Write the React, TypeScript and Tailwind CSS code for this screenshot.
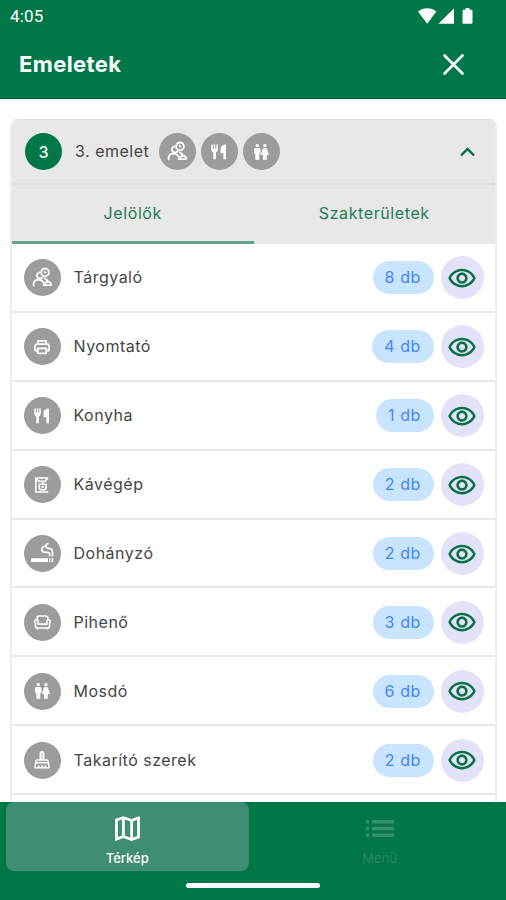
import { useState } from "react";
import type { ReactNode } from "react";

type Marker = { name: string; count: number; icon: ReactNode };

function MeetingIcon() {
  return (
    <svg width="21" height="21" viewBox="0 0 21 21" fill="none" stroke="white" strokeWidth="1.800" strokeLinecap="round" strokeLinejoin="round">
      <circle cx="13" cy="5.400" r="3.900" />
      <path d="M12.600 4v1.600h1.400" strokeWidth="1.200" />
      <path d="M7.400 5.400a3.200 3.200 0 0 0-2.400 3c0 1.400.9 2.600 2.200 3 1.400.3 2.900-.2 3.600-1.300" />
      <path d="M1.600 18.400v-1.600c0-2 1.600-3.600 3.600-4.200l3 .2c1.400.4 2.400 1.100 3 2.400" />
      <path d="M13 11.300l3 2.800M11.600 18.200h7.400v-1.400c0-1.200-1.400-2-3-2-2.200 0-3.800 1.400-4.400 3.400z" />
    </svg>
  );
}

function PrinterIcon() {
  return (
    <svg className="-ml-px" width="18" height="18" viewBox="0 0 18 18" fill="none" stroke="white" strokeWidth="1.800" strokeLinejoin="round">
      <path d="M4.800 6V2.800h8.400V6M4.600 12.600H2V8.200c0-1.200.9-2 2.100-2h9.800c1.200 0 2.100.8 2.100 2v4.400h-2.600" />
      <path d="M4.800 10.300h8.400v5H4.800z" />
    </svg>
  );
}

function KitchenIcon() {
  return (
    <svg className="-ml-px" width="18" height="18" viewBox="0 0 18 18" fill="white">
      <path d="M1.300 1.500h1.500v4.300h1V1.500h1.500v4.300h1V1.500h1.500v5c0 1.400-.8 2.500-1.900 2.900v6.900H3.300V9.400C2.100 9 1.300 7.900 1.300 6.500z" />
      <path d="M16 1.500v14.800h-2.600V10.300h-2.800V5.700c0-2.400 2.300-4.200 5.400-4.200z" />
    </svg>
  );
}

function CoffeeIcon() {
  return (
    <svg className="-ml-px" width="18" height="18" viewBox="0 0 18 18" fill="none" stroke="white" strokeWidth="1.600">
      <path d="M15.200 2H2.800v14h12.400M3 2l2.500 3.200h6.600L14.800 2" />
      <path d="M6.300 8.200h6.800v3.200a2.400 2.400 0 0 1-2.400 2.400h-2a2.400 2.400 0 0 1-2.400-2.400z" />
      <path d="M9.700 5v3.200M8.400 10.900h2.600" />
    </svg>
  );
}

function SmokingIcon() {
  return (
    <svg width="25" height="25" viewBox="0 0 25 25" fill="white">
      <path d="M1 17.200h17v3.900H1zM19 17.200h1.500v3.900H19zM21.700 17.200h1.500v3.900h-1.500z" />
      <g fill="none" stroke="white" strokeWidth="1.700">
        <path d="M18.700 2.500c-2.200.1-3.200 1.300-2.700 3.100.3 1.200 1.200 1.800 2.500 1.800 2.400.1 4 1.500 4 4v3.900" />
        <path d="M15.500 5.200c-2.600.2-4 1.700-3.700 3.600.3 1.700 1.600 2.600 3.600 2.600h1.900c1.700 0 2.500.9 2.500 2.300v1.600" />
      </g>
    </svg>
  );
}

function SofaIcon() {
  return (
    <svg width="19" height="19" viewBox="0 0 19 19" fill="none" stroke="white" strokeWidth="1.700" strokeLinejoin="round">
      <path d="M4.200 7V4.800c0-1.100.9-1.800 2-1.800h6.600c1.100 0 2 .7 2 1.800V7" />
      <path d="M5.200 11.200V8.700a1.800 1.800 0 1 0-3.500.6c.2.500.5.800.8 1v3.200c0 .9.700 1.500 1.500 1.500h11c.8 0 1.500-.6 1.500-1.500v-3.200c.3-.2.6-.5.8-1a1.800 1.800 0 1 0-3.500-.6v2.500z" />
      <path d="M4.500 15v1.400M14.500 15v1.400" />
    </svg>
  );
}

function ToiletIcon() {
  return (
    <svg className="-ml-px" width="18" height="18" viewBox="0 0 18 18" fill="white">
      <circle cx="5.300" cy="2.600" r="1.700" />
      <path d="M3.600 4.900H7c.9 0 1.500.6 1.500 1.500v4.300H7.300v6.100H3.300v-6.100H2V6.400c0-.9.700-1.500 1.600-1.500z" />
      <circle cx="12.900" cy="2.600" r="1.700" />
      <path d="M12.200 4.900h1.400c.7 0 1.200.4 1.400 1l2 6h-2.200v4.900H11v-4.900H8.800l2-6c.2-.6.7-1 1.400-1z" />
    </svg>
  );
}

function CleaningIcon() {
  return (
    <svg className="-ml-px" width="18" height="20" viewBox="0 0 18 20" fill="none" stroke="white" strokeWidth="1.500" strokeLinejoin="round">
      <path d="M7.300 10V3.300c0-.9.700-1.500 1.700-1.500s1.700.6 1.700 1.500V10" fill="white" fillOpacity="0.600" />
      <path d="M4.300 10h9.400c1 0 1.500.6 1.500 1.500v1.300H2.800v-1.300c0-.9.500-1.500 1.500-1.500z" />
      <path d="M2.600 12.800L2 17.800h14l-.6-5M5.700 17.500v-2.300M9 17.500v-2.300M12.300 17.500v-2.300" />
    </svg>
  );
}

function EyeIcon() {
  return (
    <svg className="-ml-[2px]" width="30" height="30" viewBox="0 -0.500 24 24" fill="#087044">
      <path d="M12 6c3.790 0 7.170 2.130 8.820 5.500C19.170 14.870 15.790 17 12 17s-7.170-2.130-8.820-5.500C4.830 8.130 8.210 6 12 6m0-2C7 4 2.730 7.110 1 11.500 2.730 15.890 7 19 12 19s9.270-3.110 11-7.500C21.270 7.110 17 4 12 4zm0 5c1.380 0 2.500 1.120 2.500 2.500S13.380 14 12 14s-2.500-1.120-2.500-2.500S10.620 9 12 9m0-2c-2.480 0-4.500 2.020-4.500 4.500S9.520 16 12 16s4.500-2.020 4.500-4.500S14.480 7 12 7z" />
    </svg>
  );
}

function StatusBar() {
  return (
    <div className="flex h-8 items-center justify-between pl-[10px] pr-[32px]">
      <span className="font-[Roboto] text-[17px] leading-8 tracking-[0.200px]">4:05</span>
      <svg width="56" height="17" viewBox="0 0 56 17" fill="white">
        <path d="M0 3.600C2.500 1.300 5.700.2 9.200.2s6.700 1.100 9.200 3.400L9.200 15.800z" />
        <path d="M36 .4v15.400H20.400z" />
        <path d="M45.500 1.800h2V0h4v1.800h2c.6 0 1 .4 1 1v12c0 .6-.4 1-1 1h-8c-.6 0-1-.4-1-1v-12c0-.6.400-1 1-1z" />
      </svg>
    </div>
  );
}

function Header() {
  return (
    <header className="h-[99px] shrink-0 border-b border-[#00602f] bg-[#007749] text-white">
      <StatusBar />
      <div className="flex h-[65px] items-center justify-between pl-[19px] pr-[42px]">
        <h1 className="text-[22px] font-bold tracking-[0.400px]">Emeletek</h1>
        <button aria-label="Bezárás">
          <svg width="21" height="21" viewBox="0 0 21 21" fill="none" stroke="white" strokeWidth="2.600" strokeLinecap="round">
            <path d="M1.500 1.500l18 18M19.500 1.500l-18 18" />
          </svg>
        </button>
      </div>
    </header>
  );
}

function IconCircle({ children }: { children: ReactNode }) {
  return (
    <span className="flex size-[37px] shrink-0 items-center justify-center rounded-full bg-[#9c9c9c]">
      {children}
    </span>
  );
}

function MarkerRow({ marker }: { marker: Marker }) {
  return (
    <li className="flex h-[68.900px] items-center border-b-2 border-[#e7e7eb] pl-3 pr-[11px] pt-px">
      <IconCircle>{marker.icon}</IconCircle>
      <span className="ml-[12.500px] flex-1 pb-px text-[16px] tracking-[0.500px] text-[#454545]">
        {marker.name}
      </span>
      <span className="flex h-[33px] items-center rounded-full bg-[#c9e4ff] pl-3 pr-[13px] pb-px text-[16px] tracking-[0.600px] text-[#4288f5]">
        {marker.count} db
      </span>
      <button className="ml-[7px] flex size-[43px] items-center justify-center rounded-full bg-[#e2e2f8]">
        <EyeIcon />
      </button>
    </li>
  );
}

const markers: Marker[] = [
  { name: "Tárgyaló", count: 8, icon: <MeetingIcon /> },
  { name: "Nyomtató", count: 4, icon: <PrinterIcon /> },
  { name: "Konyha", count: 1, icon: <KitchenIcon /> },
  { name: "Kávégép", count: 2, icon: <CoffeeIcon /> },
  { name: "Dohányzó", count: 2, icon: <SmokingIcon /> },
  { name: "Pihenő", count: 3, icon: <SofaIcon /> },
  { name: "Mosdó", count: 6, icon: <ToiletIcon /> },
  { name: "Takarító szerek", count: 2, icon: <CleaningIcon /> },
];

export default function App() {
  const [tab, setTab] = useState("markers");

  return (
    <div className="flex h-[900px] w-[506px] flex-col overflow-hidden bg-white font-[Inter,sans-serif]">
      <Header />

      <main className="min-h-0 flex-1 overflow-hidden pl-[10px] pr-[9px] pt-5">
        <section className="h-[760px] overflow-hidden rounded-t-lg border-x-2 border-t border-[#ececee] border-t-[#dcdcdc]">
          <div className="flex h-[65px] items-center border-b-2 border-[#dedede] bg-[#e8e8e8] pl-[13px] pr-[20px]">
            <span className="flex size-[37px] items-center justify-center rounded-full bg-[#007749] text-[16px] font-medium text-white">
              3
            </span>
            <span className="ml-[13px] pb-px text-[16px] tracking-[0.500px] text-[#454545]">3. emelet</span>
            <div className="ml-[10px] flex gap-[5px]">
              <IconCircle><MeetingIcon /></IconCircle>
              <IconCircle><KitchenIcon /></IconCircle>
              <IconCircle><ToiletIcon /></IconCircle>
            </div>
            <svg className="ml-auto" width="15" height="10" viewBox="0 0 15 10" fill="none" stroke="#087044" strokeWidth="2.400">
              <path d="M1 8.500l6.500-6.500L14 8.500" />
            </svg>
          </div>

          <div className="grid h-[59px] grid-cols-2 bg-[#e8e8e8] text-[16px] tracking-[0.600px] text-[#247c57]">
            <button
              onClick={() => setTab("markers")}
              className={`border-b-[3px] ${tab === "markers" ? "border-[#67a28a]" : "border-transparent"}`}
            >
              Jelölők
            </button>
            <button
              onClick={() => setTab("fields")}
              className={`border-b-[3px] ${tab === "fields" ? "border-[#67a28a]" : "border-transparent"}`}
            >
              Szakterületek
            </button>
          </div>

          <ul>
            {markers.map((m) => (
              <MarkerRow key={m.name} marker={m} />
            ))}
          </ul>
        </section>
      </main>

      {/* Bottom navigation */}
      <footer className="flex h-[98px] shrink-0 flex-col items-center bg-[#007749] text-[13px]">
        <nav className="grid h-[69px] w-full grid-cols-2 gap-[10px] pl-[6px] pr-[5px]">
          <button className="flex flex-col items-center rounded-lg bg-[#3f8e73] pt-[10px] font-medium text-white">
            <svg width="33" height="33" viewBox="0 0 24 24" fill="white">
              <path d="M20.500 3l-.16.030L15 5.100 9 3 3.360 4.900c-.21.070-.36.250-.36.480V20.500c0 .28.220.5.500.5l.16-.030L9 18.900l6 2.100 5.640-1.900c.21-.070.360-.250.360-.480V3.500c0-.28-.220-.5-.5-.5M10 5.470l4 1.400v11.660l-4-1.400V5.470M5 6.460l3-1.010v11.700l-3 1.160V6.460M19 17.540l-3 1.010V6.860l3-1.160v11.840z" />
            </svg>
            <span className="mt-1 leading-[18px]">Térkép</span>
          </button>
          <button className="flex flex-col items-center pt-[18px] text-[#29865f]">
            <svg width="28" height="17" viewBox="0 0 28 17" fill="#36906b">
              <path d="M0 0h3v3.500H0zM6 0h22v3.500H6zM0 6.700h3v3.500H0zM6 6.700h22v3.500H6zM0 13.400h3v3.500H0zM6 13.400h22v3.500H6z" />
            </svg>
            <span className="mt-3 leading-[18px] tracking-[0.200px]">Menü</span>
          </button>
        </nav>
        <div className="mt-[12px] h-[5px] w-[134px] rounded-full bg-white" />
      </footer>
    </div>
  );
}
